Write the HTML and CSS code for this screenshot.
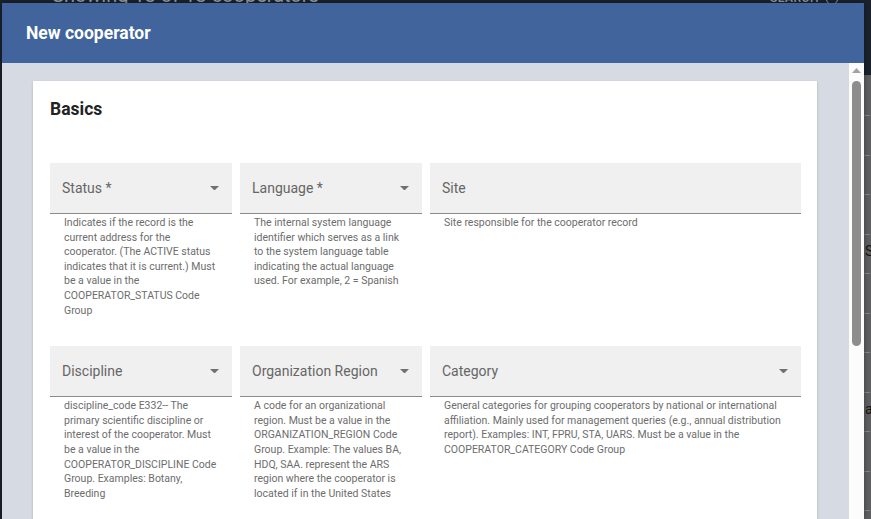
FILE: index.html
```html
<!DOCTYPE html>
<html lang="en">
<head>
<meta charset="utf-8">
<title>New cooperator</title>
<link rel="stylesheet" href="styles.css">
</head>
<body>
<div class="page">
  <div class="backdrop">
    <div class="bg-title">Showing 13 of 13 cooperators</div>
    <div class="bg-search">SEARCH <span class="bg-circle"></span></div>
    <div class="bg-strip">
      <span class="dots">…</span><span class="dots">…</span><span class="dots">…</span><span class="dots">…</span><span class="dots">…</span><span class="dots">…</span><span class="dots">…</span><span class="dots">…</span><span class="dots">…</span><span class="dots">…</span><span class="dots">…</span>
      <span class="bg-letter letter-s">S</span>
      <span class="bg-letter letter-a">a</span>
    </div>
  </div>

  <div class="dialog">
    <header class="dialog-header">New cooperator</header>
    <div class="dialog-body">
      <div class="scroll-area">
        <section class="card">
          <h2 class="card-title">Basics</h2>
          <div class="fields">
            <div class="field-group">
              <div class="field"><span class="label">Status *</span><svg class="arrow" viewBox="0 0 10 5"><path d="M0 0L5 5L10 0Z"/></svg></div>
              <div class="help">Indicates if the record is the current address for the cooperator. (The ACTIVE status indicates that it is current.) Must be a value in the COOPERATOR_STATUS Code Group</div>
            </div>
            <div class="field-group">
              <div class="field"><span class="label">Language *</span><svg class="arrow" viewBox="0 0 10 5"><path d="M0 0L5 5L10 0Z"/></svg></div>
              <div class="help">The internal system language identifier which serves as a link to the system language table indicating the actual language used. For example, 2 = Spanish</div>
            </div>
            <div class="field-group">
              <div class="field"><span class="label">Site</span></div>
              <div class="help">Site responsible for the cooperator record</div>
            </div>
            <div class="field-group">
              <div class="field"><span class="label">Discipline</span><svg class="arrow" viewBox="0 0 10 5"><path d="M0 0L5 5L10 0Z"/></svg></div>
              <div class="help">discipline_code E332-- The primary scientific discipline or interest of the cooperator. Must be a value in the COOPERATOR_DISCIPLINE Code Group. Examples: Botany, Breeding</div>
            </div>
            <div class="field-group">
              <div class="field"><span class="label">Organization Region</span><svg class="arrow" viewBox="0 0 10 5"><path d="M0 0L5 5L10 0Z"/></svg></div>
              <div class="help">A code for an organizational region. Must be a value in the ORGANIZATION_REGION Code Group. Example: The values BA, HDQ, SAA. represent the ARS region where the cooperator is located if in the United States</div>
            </div>
            <div class="field-group">
              <div class="field"><span class="label">Category</span><svg class="arrow" viewBox="0 0 10 5"><path d="M0 0L5 5L10 0Z"/></svg></div>
              <div class="help">General categories for grouping cooperators by national or international affiliation. Mainly used for management queries (e.g., annual distribution report). Examples: INT, FPRU, STA, UARS. Must be a value in the COOPERATOR_CATEGORY Code Group</div>
            </div>
          </div>
        </section>
      </div>
      <div class="scrollbar">
        <svg class="scroll-up" viewBox="0 0 9 5"><path d="M0 5L4.5 0L9 5Z"/></svg>
        <div class="scroll-thumb"></div>
      </div>
    </div>
  </div>
</div>
</body>
</html>
```
FILE: styles.css
```css
* { box-sizing: border-box; }
html, body { margin: 0; padding: 0; height: 100%; overflow: hidden; }
body {
  font-family: Roboto, "Liberation Sans", Arial, sans-serif;
  background: #1b222d;
}
.page { position: relative; width: 100%; height: 100%; }

.backdrop { position: absolute; inset: 0; }
.bg-title {
  position: absolute; left: 52px; top: -17px;
  font-size: 20px; color: #9a9ea4; white-space: nowrap;
}
.bg-search {
  position: absolute; left: 770px; top: -9px;
  font-size: 12px; letter-spacing: 0.5px; color: #9a9ea4; font-weight: 500;
}
.bg-circle {
  display: inline-block; width: 12px; height: 12px; border: 1.5px solid #9a9ea4;
  border-radius: 50%; vertical-align: middle; margin-left: 4px;
}
.bg-strip {
  position: absolute; left: 864px; top: 75px; bottom: 0; width: 7px;
  background: #5f6061; display: flex; flex-direction: column;
  padding-top: 32px; overflow: hidden;
}
.dots {
  display: block; height: 39.5px; flex: 0 0 39.5px;
  color: #c8c8c8; font-size: 9px; line-height: 12px;
}
.bg-letter { position: absolute; left: 1px; color: #151515; font-size: 14px; line-height: 16px; }
.letter-s { top: 168px; }
.letter-a { top: 326px; }

.dialog {
  position: absolute; left: 2px; top: 3px; width: 862px; height: calc(100% - 3px);
  display: flex; flex-direction: column; overflow: hidden;
  box-shadow: 0 0 6px rgba(0,0,0,0.4);
}
.dialog-header {
  flex: 0 0 60px; background: #40649b; color: #fff;
  font-size: 17.5px; font-weight: 700; display: flex; align-items: center;
  padding: 0 0 0 24px;
}
.dialog-body { flex: 1; display: flex; min-height: 0; background: #d6dae3; }
.scroll-area { flex: 1; padding: 18px 32px 0 31px; overflow: hidden; }

.card {
  background: #fff; min-height: 600px;
  padding: 17px 16px 0 17px;
  box-shadow: 0 2px 1px -1px rgba(0,0,0,.2), 0 1px 1px rgba(0,0,0,.14), 0 1px 3px rgba(0,0,0,.12);
}
.card-title {
  margin: 0; font-size: 17.5px; font-weight: 700; line-height: 22px; color: #222;
}
.fields {
  margin-top: 43px;
  display: grid; grid-template-columns: 182px 182px 371px;
  column-gap: 8px; row-gap: 28px; align-items: start;
}
.field {
  height: 51px; background: #f0f0f0; border-bottom: 1px solid #8b8b8b;
  display: flex; align-items: center; justify-content: space-between;
  padding: 0 13px 0 12px;
}
.label { font-size: 14px; color: #666; }
.arrow { width: 9px; height: 4.5px; fill: #707070; }
.help {
  padding: 2px 14px 0 14px;
  font-size: 10.5px; line-height: 14.6px; color: #6d6d6d;
}

.scrollbar {
  flex: 0 0 15px; background: #fcfcfc; position: relative;
  display: flex; flex-direction: column; align-items: center;
}
.scroll-up { width: 9px; height: 5px; fill: #a3a3a3; margin-top: 5px; }
.scroll-thumb {
  width: 9px; height: 265px; background: #8d8d8d; border-radius: 5px; margin-top: 8px;
}
```
